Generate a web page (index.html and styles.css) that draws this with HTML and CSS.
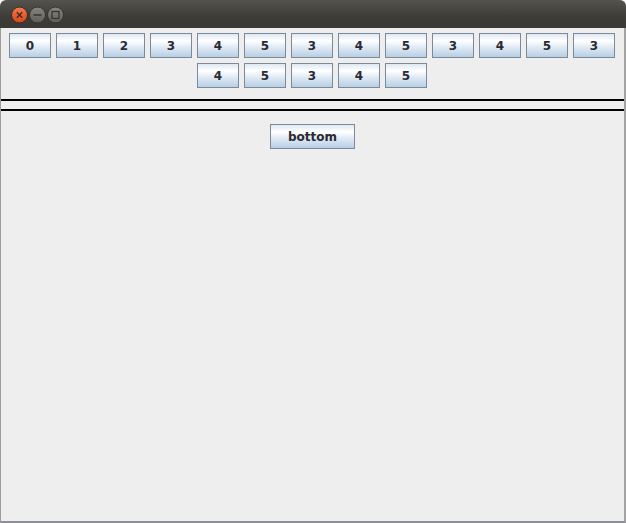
FILE: index.html
```html
<!DOCTYPE html>
<html>
<head>
  <title>Flow test</title>
  <link rel="stylesheet" href="styles.css">
</head>
<body>
  <div id="window">
    <div id="titlebar">
      <svg class="controls" width="70" height="28" viewBox="0 0 70 28">
        <defs>
          <linearGradient id="close-grad" x1="0" y1="0" x2="0" y2="1">
            <stop offset="0" stop-color="#f47a4a"/>
            <stop offset="1" stop-color="#d9441a"/>
          </linearGradient>
          <linearGradient id="grey-grad" x1="0" y1="0" x2="0" y2="1">
            <stop offset="0" stop-color="#8a8782"/>
            <stop offset="1" stop-color="#5f5d58"/>
          </linearGradient>
        </defs>
        <!-- close -->
        <circle cx="19.5" cy="15" r="8" fill="url(#close-grad)" stroke="#3a2a22" stroke-width="1"/>
        <path d="M16.8 12.3 L22.2 17.7 M22.2 12.3 L16.8 17.7" stroke="#3b2b25" stroke-width="1.4"/>
        <!-- minimize -->
        <circle cx="37.5" cy="15" r="8" fill="url(#grey-grad)" stroke="#34332f" stroke-width="1"/>
        <path d="M33.5 15 L41.5 15" stroke="#3a3936" stroke-width="1.6"/>
        <!-- maximize -->
        <circle cx="55.5" cy="15" r="8" fill="url(#grey-grad)" stroke="#34332f" stroke-width="1"/>
        <rect x="52" y="11.5" width="7" height="7" fill="none" stroke="#3a3936" stroke-width="1.4"/>
      </svg>
    </div>

    <div id="content">
      <div id="top-panel">
        <button class="jbtn">0</button>
        <button class="jbtn">1</button>
        <button class="jbtn">2</button>
        <button class="jbtn">3</button>
        <button class="jbtn">4</button>
        <button class="jbtn">5</button>
        <button class="jbtn">3</button>
        <button class="jbtn">4</button>
        <button class="jbtn">5</button>
        <button class="jbtn">3</button>
        <button class="jbtn">4</button>
        <button class="jbtn">5</button>
        <button class="jbtn">3</button>
        <button class="jbtn">4</button>
        <button class="jbtn">5</button>
        <button class="jbtn">3</button>
        <button class="jbtn">4</button>
        <button class="jbtn">5</button>
      </div>

      <div class="rule first"></div>
      <div class="rule"></div>

      <div id="bottom-panel">
        <button class="jbtn wide">bottom</button>
      </div>
    </div>
  </div>
</body>
</html>
```

FILE: styles.css
```css
body {
  margin: 0;
  background: #ffffff;
  font-family: "DejaVu Sans", sans-serif;
}

#window {
  width: 626px;
  height: 523px;
  display: flex;
  flex-direction: column;
}

#titlebar {
  height: 28px;
  flex: none;
  border-radius: 6px 6px 0 0;
  background: linear-gradient(#55534e, #3d3c38 60%, #3a3935);
}
#titlebar .controls {
  display: block;
}

#content {
  flex: 1;
  background: #eeeeee;
  border-left: 1px solid #9d9d9d;
  border-right: 2px solid #a3a3a3;
  border-bottom: 2px solid #8e8e96;
}

#top-panel {
  display: flex;
  flex-wrap: wrap;
  justify-content: center;
  gap: 5px;
  padding: 5px 6px 0 5px;
}

.jbtn {
  width: 42px;
  height: 25px;
  margin: 0;
  padding: 0;
  border: 1px solid #7a8a99;
  border-radius: 0;
  background: linear-gradient(#dde8f3 0%, #ffffff 30%, #dde8f3 60%, #b8cfe5 100%);
  font-family: "DejaVu Sans", sans-serif;
  font-weight: bold;
  font-size: 12px;
  color: #2a2a33;
  text-align: center;
}
.jbtn.wide {
  width: 85px;
}

.rule {
  height: 2px;
  background: #000000;
  margin-top: 8px;
}
.rule.first {
  margin-top: 11px;
}

#bottom-panel {
  display: flex;
  justify-content: center;
  padding-top: 13px;
}
```
